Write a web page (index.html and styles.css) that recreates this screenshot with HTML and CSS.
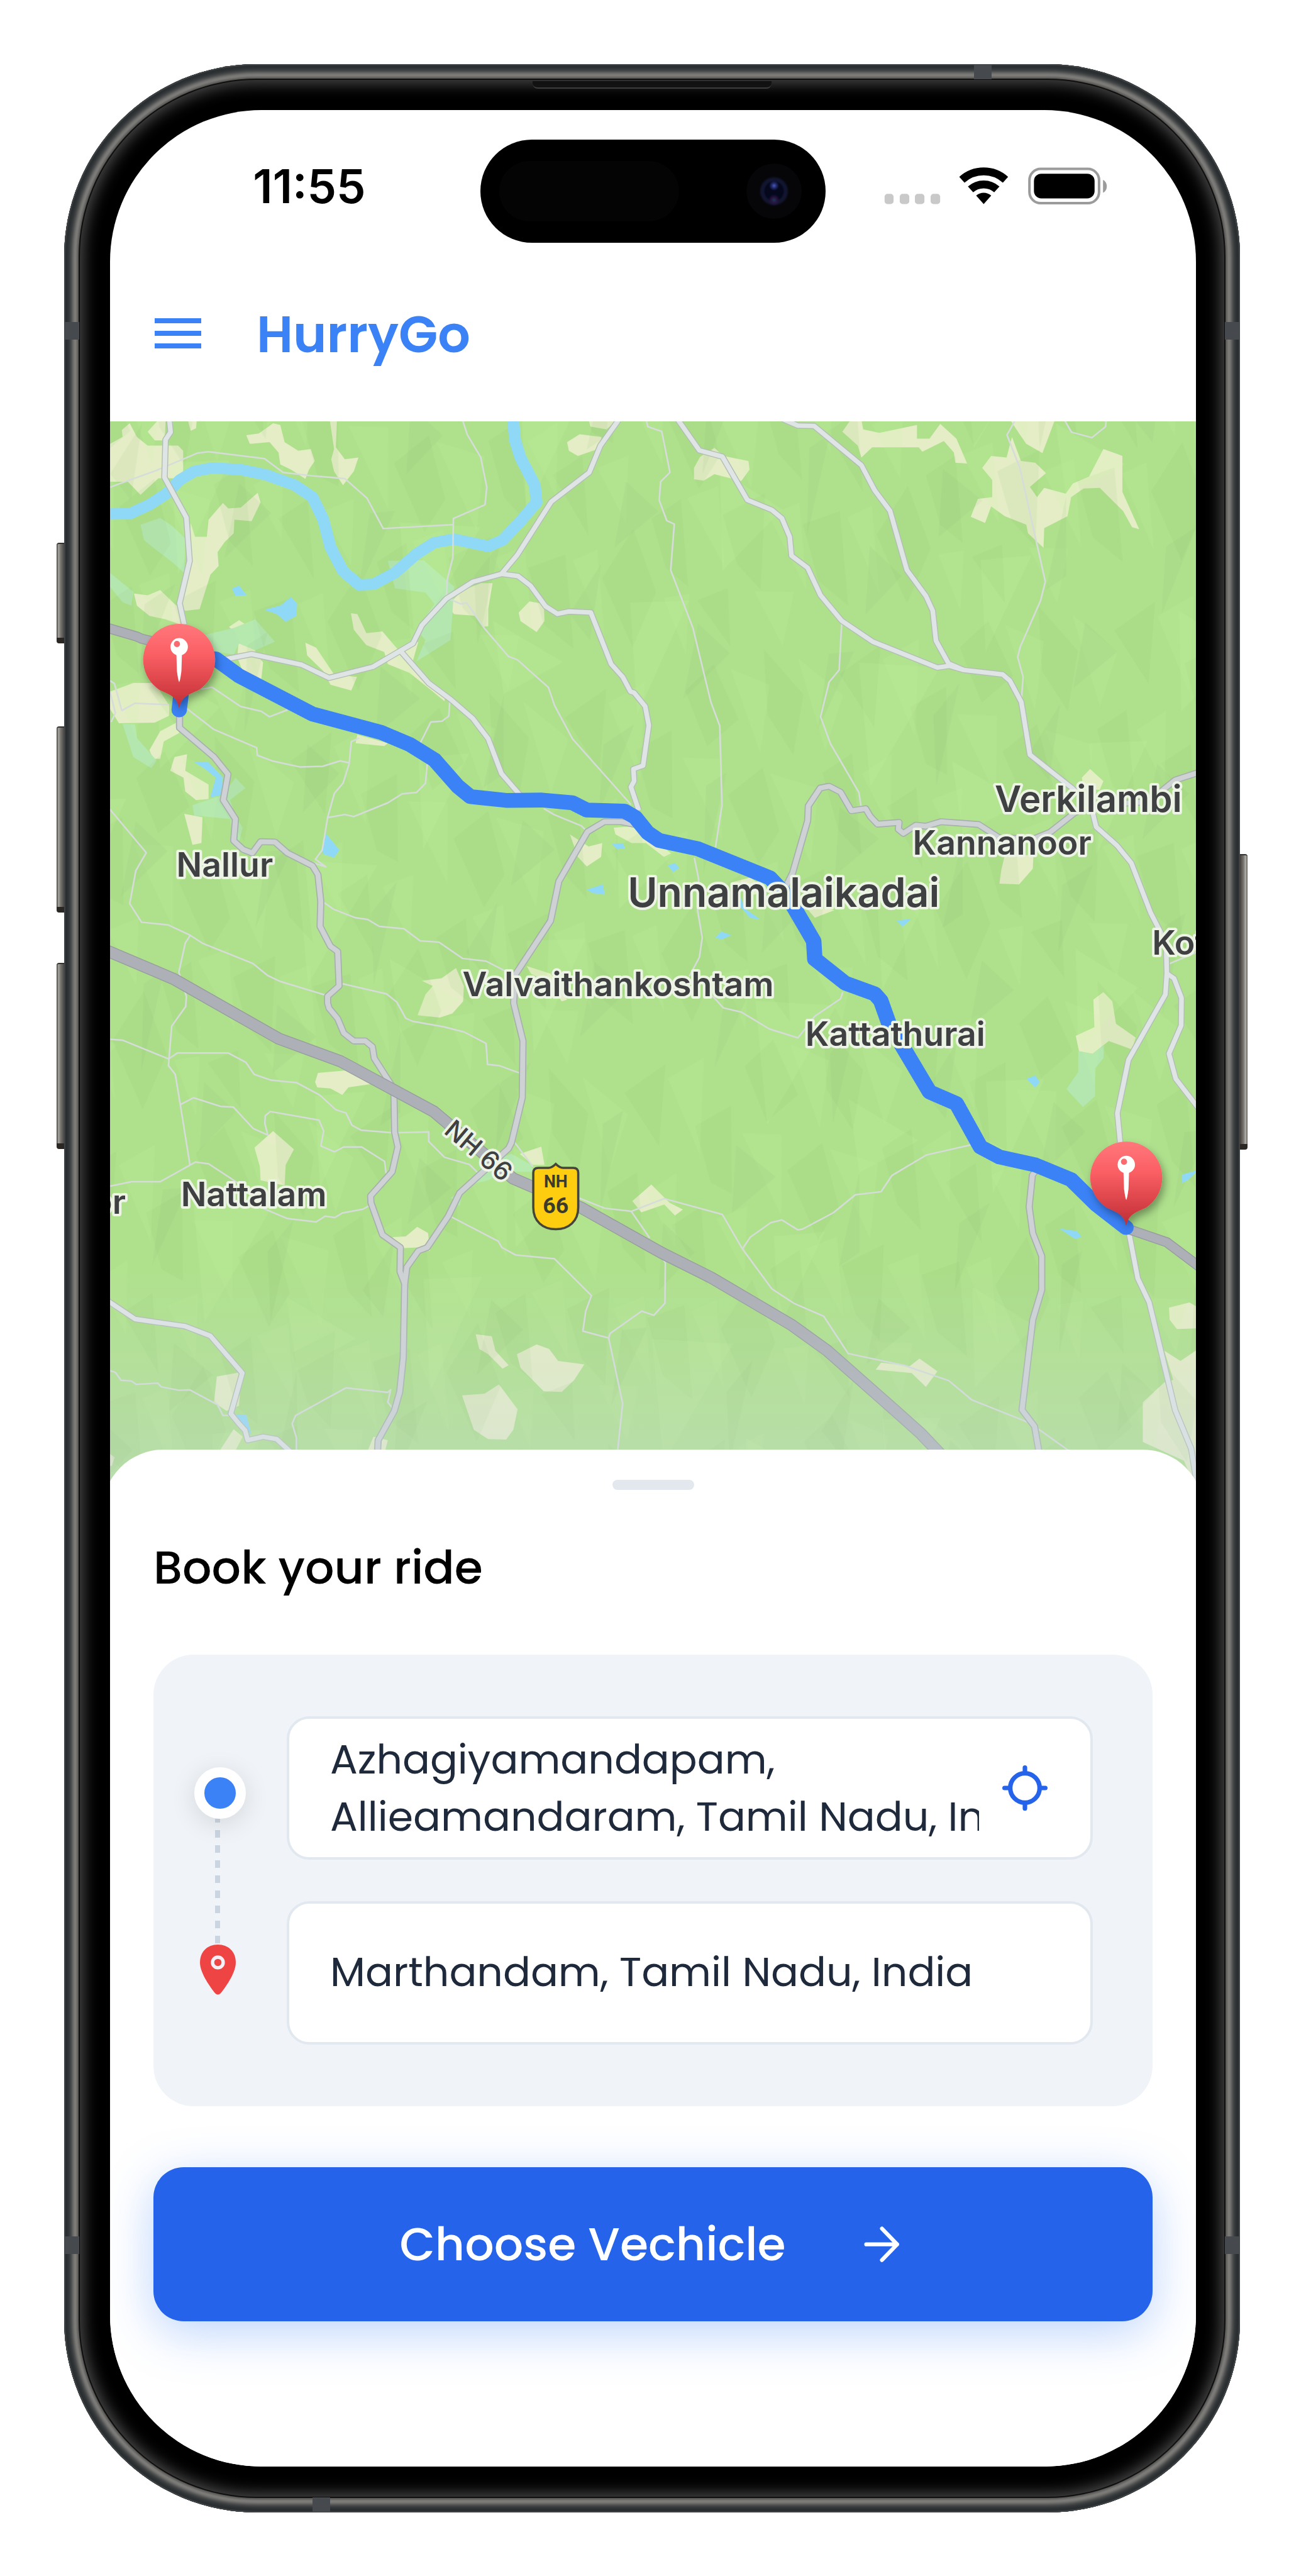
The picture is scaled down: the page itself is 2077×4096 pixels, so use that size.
FILE: index.html
```html
<!DOCTYPE html>
<html lang="en">
<head>
<meta charset="utf-8">
<meta name="viewport" content="width=device-width, initial-scale=1">
<title>HurryGo</title>
<link rel="stylesheet" href="styles.css">
</head>
<body>
<div class="phone">
  <span class="side-key side-key-action"></span>
  <span class="side-key side-key-up"></span>
  <span class="side-key side-key-down"></span>
  <span class="side-key side-key-power"></span>
  <span class="antenna antenna-top"></span>
  <span class="antenna antenna-bottom"></span>
  <span class="antenna antenna-side antenna-left antenna-high"></span>
  <span class="antenna antenna-side antenna-right antenna-high"></span>
  <span class="antenna antenna-side antenna-left antenna-low"></span>
  <span class="antenna antenna-side antenna-right antenna-low"></span>
  <div class="bezel">
    <span class="earpiece"></span>
    <div class="screen">
      <div class="status-bar">
        <time class="clock">11:55</time>
        <div class="island">
          <span class="island-sensor"></span>
          <span class="island-camera"></span>
        </div>
        <svg class="status-icons" viewBox="1572 290 402 78" aria-hidden="true">
          <g fill="#c9c9c9">
            <rect x="1574" y="343" width="16" height="18" rx="5"/>
            <rect x="1601" y="343" width="17" height="18" rx="5"/>
            <rect x="1628" y="343" width="17" height="18" rx="5"/>
            <rect x="1656" y="343" width="17" height="18" rx="5"/>
          </g>
          <g fill="none" stroke="#000" stroke-width="14">
            <path d="M1711.7 317.9A58 58 0 0 1 1789.3 317.9"/>
            <path d="M1727.1 335A35 35 0 0 1 1773.9 335"/>
          </g>
          <path d="M1750.5 361L1737.1 346.1A20 20 0 0 1 1763.9 346.1Z"/>
          <rect x="1832" y="298.500" width="124" height="61" rx="20" fill="none" stroke="#9b9b9b" stroke-width="4.500"/>
          <rect x="1840" y="307" width="108" height="44" rx="13"/>
          <path d="M1963 318C1972 322 1972 337 1963 341Z" fill="#9b9b9b"/>
        </svg>
      </div>

      <header class="app-bar">
        <button class="menu-button" type="button" aria-label="Menu"><span></span><span></span><span></span></button>
        <h1 class="brand">HurryGo</h1>
      </header>

      <svg class="map" viewBox="196 749 1932 1911" role="img" aria-label="Route map">
        <defs>
          <pattern id="facets" width="430" height="520" patternUnits="userSpaceOnUse" patternTransform="rotate(-9) scale(1.15 1.3)">
            <g fill="#86b467" fill-opacity=".09">
              <path d="M20 40L70 10 95 90 40 120Z"/><path d="M150 0L200 70 170 150 140 90Z"/>
              <path d="M260 50L330 20 300 130Z"/><path d="M360 110L420 90 400 210 370 190Z"/>
              <path d="M60 190L120 160 130 250 90 290Z"/><path d="M210 180L260 160 250 300 220 260Z"/>
              <path d="M300 240L350 220 340 330Z"/><path d="M10 320L60 300 50 420 20 390Z"/>
              <path d="M120 330L190 310 160 440 130 400Z"/><path d="M240 360L300 350 290 480 250 440Z"/>
              <path d="M350 390L410 330 430 420 380 490Z"/><path d="M60 440L110 430 100 510Z"/>
            </g>
            <g fill="#c4f79e" fill-opacity=".11">
              <path d="M95 20L150 50 120 140Z"/><path d="M200 20L260 80 220 150Z"/>
              <path d="M330 40L390 20 360 150Z"/><path d="M0 130L60 140 40 250Z"/>
              <path d="M130 170L200 200 170 300Z"/><path d="M270 190L320 170 300 270Z"/>
              <path d="M370 240L420 230 400 320Z"/><path d="M70 300L120 290 110 400Z"/>
              <path d="M190 340L240 330 230 450Z"/><path d="M310 360L350 350 340 470Z"/>
              <path d="M150 440L210 450 180 520Z"/><path d="M10 430L50 430 30 510Z"/>
            </g>
          </pattern>
          <pattern id="ridges" width="610" height="370" patternUnits="userSpaceOnUse" patternTransform="rotate(17) scale(1.4 1.7)">
            <g fill="#719f55" fill-opacity=".07">
              <path d="M30 30L60 20 45 110Z"/><path d="M180 60L200 20 210 130Z"/>
              <path d="M330 10L345 90 310 70Z"/><path d="M470 40L520 60 480 120Z"/>
              <path d="M100 180L160 200 120 250Z"/><path d="M260 170L290 250 270 270Z"/>
              <path d="M400 190L430 160 420 260Z"/><path d="M540 200L560 180 570 290Z"/>
              <path d="M40 280L90 300 60 350Z"/><path d="M330 290L380 310 340 360Z"/>
            </g>
            <g fill="#cdfaa8" fill-opacity=".11">
              <path d="M70 30L170 10 130 150Z"/><path d="M220 100L320 120 260 170Z"/>
              <path d="M380 40L450 20 430 150Z"/><path d="M180 260L240 240 220 350Z"/>
              <path d="M440 250L530 270 480 350Z"/>
            </g>
          </pattern>
          <linearGradient id="fade" x1="0" y1="0" x2="0" y2="1">
            <stop offset="0" stop-color="#c9d8dc" stop-opacity="0"/>
            <stop offset="1" stop-color="#c9d8dc" stop-opacity=".42"/>
          </linearGradient>
          <linearGradient id="pinRed" x1="0" y1="0" x2="0" y2="1">
            <stop offset="0" stop-color="#ff777b"/>
            <stop offset=".35" stop-color="#fb6065"/>
            <stop offset=".8" stop-color="#d23c42"/>
            <stop offset="1" stop-color="#b92f33"/>
          </linearGradient>
          <filter id="pinShadow" x="-50%" y="-30%" width="200%" height="180%">
            <feDropShadow dx="4" dy="8" stdDeviation="7" flood-color="#000" flood-opacity=".35"/>
          </filter>
          <g id="pin">
            <path d="M0 87C-4 64 -18 62 -36 53A64 64 0 1 1 36 53C18 62 4 64 0 87Z" fill="url(#pinRed)" filter="url(#pinShadow)"/>
            <path d="M-5 -12H5L4 20Q2 36 0 40Q-2 36 -4 20Z" fill="#fff"/>
            <circle cy="-23" r="15.500" fill="#fff"/>
            <circle cx="-4" cy="-28" r="5.500" fill="#fb6a6f"/>
          </g>
          <g id="lightRoads">
            <path d="M190 5L194 46 180 68 177 178 238 294 247 420 219 543 232 605"/>
            <path d="M300 715L360 703 420 691 560 722 636 760 758 728 870 660 895 607 963 530 1037 481 1117 458 1161 403 1256 248 1362 163 1393 85 1443 12"/>
            <path d="M1117 458L1163 464 1198 492 1240 552 1273 574 1305 567 1366 570 1423 720 1455 757 1477 800 1487 803 1518 843 1528 898 1512 1015 1485 1025 1487 1060 1478 1077 1500 1145"/>
            <path d="M838 685L914 775 976 823 1037 878 1080 937 1117 1038 1170 1102"/>
            <g transform="translate(1521 0)">
              <path d="M87 8L148 99 212 117 282 243 350 272 378 296 400 350 405 405 450 440 486 520 545 594 632 655 812 730 845 725 885 737 994 750 1014 768 1046 830 1070 983 1185 1078 1240 1130 1255 1193 1313 1247 1353 1298 1407 1443 1450 1530 1452 1619 1448 1680 1345 1870 1314 2025 1322 2110"/>
              <path d="M380 8L423 27 468 28 600 142 637 215 680 275 727 447 780 522 799 565 808 652 843 718 885 737"/>
              <path d="M1452 1619L1472 1633 1493 1690 1492 1770 1458 1852 1477 1925 1540 2010"/>
              <path d="M1345 2365L1371 2505 1403 2575 1475 2887 1520 3000 1534 3090"/>
            </g>
            <path d="M20 2571L95 2623 235 2644 305 2672 394 2780 362 2898 383 2925 402 2947 409 2975 452 2965 490 2972 535 3015"/>
          </g>
          <g id="greyRoads">
            <path d="M219 860L219 905 315 990 354 1040 341 1115 375 1170 370 1233 397 1259 422 1269 445 1236 485 1237 520 1269 590 1306 605 1332 613 1410 611 1482 640 1540 660 1555 664 1655 632 1685 632 1705 636 1720 660 1750 677 1792 705 1815 737 1815 757 1832 762 1865 808 1940 817 1965 819 2080 828 2123 812 2195 752 2265 753 2285 785 2378 835 2415 834 2485 847 2520 843 2735 833 2835 818 2890 773 2975 770 3030"/>
            <path d="M1510 1190L1450 1178 1404 1178 1357 1207 1277 1351 1254 1466 1155 1623 1151 1705 1177 1815 1175 1980 1145 2110 1137 2127 1000 2257 968 2325 910 2415 885 2425 853 2472 847 2520"/>
            <path d="M1906 1375L1929 1327 1971 1175 1973 1132 2006 1080 2031 1075 2063 1092 2093 1146 2133 1140 2146 1163 2166 1185 2226 1180 2224 1200 2238 1212 2273 1188 2301 1191 2343 1178 2448 1186 2506 1225 2601 1228 2648 1208 2716 1152 2761 1130 2921 1120 2996 1057 3070 1032"/>
            <path d="M2609 2190L2598 2205 2589 2297 2599 2373 2624 2440 2624 2538 2599 2625 2569 2887 2604 2935 2620 3030"/>
          </g>
        </defs>

        <rect x="196" y="749" width="1932" height="1911" fill="#afe18d"/>
        <g transform="translate(180 740) scale(.6378 .6122)">
          <g fill="#e4edc6">
            <path d="M25 80L60 60 58 40 80 20 100 60 130 85 215 85 229 100 229 180 160 180 110 228 75 190 25 190ZM160 10L180 10 178 70 150 70 130 45ZM242 10L267 10 265 35 250 42Z"/>
            <path d="M405 55L440 50 480 20 500 25 512 75 550 100 585 95 596 130 580 155 570 182 530 155 500 140 495 105 470 75 415 80Z"/>
            <path d="M638 10L658 10 655 90 680 125 718 120 705 160 675 200 650 160 642 125 650 95Z"/>
            <path d="M437 222L445 250 420 305 372 300 370 340 345 365 325 395 328 435 305 460 275 560 235 565 215 545 245 430 250 310 262 350 295 350 300 300 340 252 355 268 390 265Z"/>
            <path d="M92 515L130 520 165 505 205 545 222 560 235 610 180 590 135 580 100 550Z"/>
            <path d="M357 612L385 592 410 610 432 690 452 715 447 765 400 755 380 700 385 640Z"/>
            <path d="M570 658L600 672 650 750 714 757 698 797 640 780 620 740 575 695Z"/>
            <path d="M697 572L715 575 740 630 785 625 830 680 885 655 870 710 900 755 960 800 958 828 920 795 860 745 800 720 790 685 740 665 705 620Z"/>
            <path d="M965 550L1010 505 1060 485 1092 485 1080 560 1080 610 1065 612 1045 580 985 575Z"/>
            <path d="M1165 570L1195 538 1235 545 1237 595 1215 627 1170 595ZM1300 75L1335 52 1395 60 1400 90 1330 115 1305 100ZM1360 10L1440 10 1410 38 1365 30Z"/>
            <path d="M25 800L90 775 150 775 190 840 190 870 150 890 50 892 25 850ZM135 970L165 915 210 890 218 920 175 945 165 995 145 995Z"/>
            <path d="M193 1030L205 990 240 982 235 1030 300 1070 300 1112 265 1115 235 1090 230 1050ZM232 1155L283 1165 280 1240 255 1245Z"/>
            <path d="M1308 1215L1360 1250 1398 1240 1395 1280 1355 1308 1330 1280ZM1430 1195L1500 1190 1590 1270 1570 1280 1520 1240 1480 1240 1435 1215ZM715 925L800 950 790 958 710 950Z"/>
            <g transform="translate(1521 0)">
              <path d="M133 150L150 118 190 92 215 115 285 130 288 155 265 188 190 168 160 187 133 183Z"/>
              <path d="M547 45L570 10 600 10 605 38 650 48 755 25 755 65 790 65 820 22 865 65 895 137 862 135 858 105 830 72 770 103 760 90 630 90 600 120 590 85Z"/>
              <path d="M1015 10L1140 10 1105 107 1060 80 1040 50Z"/>
              <path d="M1020 60L1045 130 1085 135 1115 165 1070 205 1090 235 1110 208 1170 225 1190 195 1235 175 1275 95 1328 115 1328 220 1375 328 1355 322 1330 275 1265 208 1220 210 1185 235 1175 290 1110 325 1108 382 1065 340 1060 315 1000 290 962 262 945 310 905 292 925 240 965 235 965 185 937 150 962 115 1005 120Z"/>
              <path d="M1215 1050L1238 1025 1275 1060 1265 1085 1220 1085ZM1000 1275L1080 1275 1078 1315 1040 1360 985 1358 990 1320ZM235 1355L290 1340 340 1380 300 1390ZM440 1420L525 1435 470 1457Z"/>
            </g>
            <g transform="translate(0 1535)">
              <path d="M895 105L950 98 990 68 1012 120 1010 165 980 200 945 212 883 205 905 145 925 120ZM1187 62L1255 85 1300 160 1285 165 1250 110 1200 85Z"/>
              <path d="M597 400L605 373 690 365 755 405 690 415 673 437 640 418 603 415ZM428 590L480 542 538 595 515 640 512 700 445 685 443 645Z"/>
              <path d="M813 850L850 848 882 820 912 838 918 890 885 880 835 882ZM1168 608L1228 587 1237 640 1205 640Z"/>
              <path d="M1482 745L1535 697 1586 750 1623 770 1601 787 1571 755 1507 778Z"/>
              <path d="M1045 1132L1090 1138 1100 1180 1137 1222 1120 1232 1080 1190 1055 1175ZM1160 1190L1215 1162 1250 1175 1275 1210 1348 1220 1320 1265 1285 1300 1235 1298 1170 1230Z"/>
              <path d="M1007 1310L1070 1305 1110 1278 1162 1350 1150 1410 1130 1438 1080 1437 1040 1410ZM323 1255L390 1242 385 1340 350 1355 315 1330Z"/>
              <path d="M325 1480L370 1408 395 1430 370 1480ZM740 1480L760 1430 800 1440 790 1480ZM25 1480L38 1490 30 1515 25 1515Z"/>
            </g>
            <g transform="translate(1521 1535)">
              <path d="M1247 160L1275 138 1300 165 1310 230 1365 270 1355 305 1290 280 1245 317 1207 310 1198 265 1250 240Z"/>
              <path d="M640 1235L655 1215 735 1225 762 1203 812 1240 780 1285 740 1245ZM1458 1055L1515 1040 1540 1055 1540 1115 1480 1117 1460 1090Z"/>
              <path d="M1385 1330L1445 1272 1470 1265 1445 1180 1490 1210 1540 1175 1540 1600 1500 1500 1385 1445Z"/>
            </g>
          </g>
          <g fill="#b4e7b0">
            <path d="M110 315L165 295 200 320 235 355 232 455 200 425 150 385 120 360ZM25 455L90 510 85 550 60 540 25 495Z"/>
            <path d="M800 420L900 418 985 495 975 650 880 712 905 650 880 620 920 560 930 545 905 512 820 500Z"/>
            <path d="M290 635L370 615 430 590 485 655 430 680 385 660 370 692 300 680ZM60 893L95 895 100 935 155 1000 140 1022 90 990Z"/>
            <path d="M255 1130L340 1100 375 1050 403 1080 360 1115 375 1160 395 1195 385 1235 370 1230 360 1170 260 1160Z"/>
            <path d="M1015 2235L1100 2160 1145 2143 1200 2175 1205 2195 1120 2195 1080 2220 1020 2235ZM975 2270L1010 2250 1000 2295Z"/>
            <path d="M2726 1845L2766 1853 2798 1825 2796 1865 2773 1895 2773 1975 2739 2007 2693 1955 2726 1905Z"/>
          </g>
        </g>
        <rect x="196" y="749" width="1932" height="1911" fill="url(#facets)"/>
        <rect x="196" y="749" width="1932" height="1911" fill="url(#ridges)"/>

        <g transform="translate(180 740) scale(.6378 .6122)" stroke-linejoin="round">
          <g fill="#8fd9f7">
            <path d="M365 500L385 492 407 520 375 522ZM455 562L500 550 530 525 547 545 545 580 515 597 490 575ZM260 1005L300 1005 340 1050 335 1100 305 1108 320 1050 290 1025Z"/>
            <path d="M618 1255L628 1213 665 1260 650 1283 620 1272ZM1425 1243L1455 1240 1462 1255 1440 1258ZM1355 1375L1400 1360 1405 1390 1370 1385Z"/>
            <path d="M1581 1305L1601 1298 1613 1312 1596 1325ZM1781 1390L1796 1430 1839 1462 1811 1458 1783 1425ZM1713 1515L1731 1497 1759 1508 1731 1520ZM2219 1465L2261 1460 2236 1483Z"/>
            <path d="M375 2900L405 2900 420 2960 395 2935ZM2581 1925L2606 1915 2619 1935 2606 1950ZM2673 2360L2721 2367 2736 2385 2716 2390ZM3016 2203L3061 2190 3031 2220 3016 2228Z"/>
          </g>
          <path d="M10 284L80 283 135 257 185 223 220 185 260 160 310 150 390 155 460 170 540 200 590 235 620 300 640 380 675 450 720 490 760 488 820 455 880 400 930 367 985 357 1080 378 1120 360 1170 305 1215 250 1210 200 1170 120 1155 70 1149 5" fill="none" stroke="#8fd9f7" stroke-width="33"/>

          <g fill="none" stroke="#d6dcda" stroke-width="4.500">
            <path d="M25 206L155 157 268 107 300 103 456 123 508 163 590 173 680 181 742 238 787 326 981 315"/>
            <path d="M1008 10L1022 54 1059 119 1076 206 1071 257 983 297 981 412 966 473 963 527 1003 545 1020 542 1070 617 1137 698 1161 707 1248 788 1265 840 1315 937 1478 1128"/>
            <path d="M25 768L37 776 58 855 94 834 190 838M25 800L40 862 28 888M280 793L310 787 389 843 447 857 470 873 520 853"/>
            <path d="M238 848L315 910 434 963 436 985 480 1002 556 1019 618 1017 667 1001 692 1007M720 935L698 945 692 1010 675 1066 651 1095 632 1166 617 1260 598 1287 627 1309 590 1297"/>
            <path d="M632 1166L680 1157 705 1163 800 1123 840 1097 880 1093 905 1066 910 1010M890 950L920 888 951 886 970 871 973 825"/>
            <path d="M25 1142L126 1268 97 1320 80 1416 113 1470 188 1478 249 1508 235 1530 217 1615 238 1685 236 1715 197 1772 188 1887 207 1912 221 2000 248 2175M249 1508L283 1531 424 1590 465 1625 500 1642 630 1683"/>
            <path d="M618 1410L648 1432 710 1457 744 1462 776 1482 845 1489 890 1524 943 1528 1008 1575 1074 1583 1130 1613M1235 1140L1265 1158 1340 1190 1355 1205"/>
            <path d="M1521 10L1525 30 1564 44 1587 163 1561 190 1557 244 1578 303 1599 313 1589 447 1651 615 1701 830 1726 900 1732 1130 1714 1252M1655 1283L1667 1345 1664 1435 1677 1515 1669 1572 1641 1627"/>
            <path d="M2066 600L2059 737 2031 772 2007 873 2035 952 2114 1093 2121 1140M2551 10L2527 54 2563 150 2634 480 2621 535 2564 670 2557 700 2572 757 2567 830M2687 10L2707 46 2764 62 2802 30 2804 10"/>
            <g transform="translate(0 1535)">
              <path d="M25 275L61 278 188 332 213 315 355 315 404 342 427 377 475 394 545 401 610 437 655 480 683 489 700 525 725 539 815 547 914 544 914 572 958 618 1028 639 1050 662"/>
              <path d="M670 113L796 143 825 167 850 214 870 223 957 239 1013 254 1074 287 1078 348 1112 352 1170 374M221 465L258 445 333 470 369 472 425 535 465 553 457 520 458 497 472 485 608 510 621 542 613 585 651 602 677 588 727 588 791 630 795 665"/>
              <path d="M25 702L85 689 165 689 263 632 300 637 385 695M430 757L520 796 600 806 625 789 652 793 673 780 730 769 755 755M1150 570L1205 645M1330 735L1405 766 1479 775 1571 738 1733 784 1789 884 1871 1000 1934 1043 2016 1080 2084 1188 2241 1223 2365 1267 2429 1323 2591 1390M1479 775L1530 852"/>
              <path d="M975 790L1108 862 1118 880 1157 902 1265 913 1368 1020 1352 1065 1344 1123 1416 1143 1420 1130 1508 1065 1542 1077 1573 1042 1574 925 1566 910M1416 1143L1455 1333 1438 1500"/>
              <path d="M25 1238L40 1243 56 1266 85 1268 98 1278 158 1274 168 1285 217 1295 248 1294 325 1337 340 1368 360 1368M545 1480L545 1433 533 1392 543 1368 683 1288 800 1301 808 1293 800 1330 818 1353"/>
              <path d="M1706 150L1736 184 1786 196 1864 245 1944 271 1991 208 2063 157 2069 138M2611 1405L2706 1475M1789 884L1811 850 1868 808 1899 800 1944 829 1958 826 2043 779 2104 727 2176 718 2206 671 2303 611 2426 582M2979 56L3061 20"/>
            </g>
          </g>

          <use href="#greyRoads" fill="none" stroke="#a7b0ad" stroke-width="20"/>
          <use href="#greyRoads" fill="none" stroke="#ced2d5" stroke-width="14"/>
          <use href="#lightRoads" fill="none" stroke="#b3bdb5" stroke-width="18"/>
          <use href="#lightRoads" fill="none" stroke="#dfe4e5" stroke-width="13"/>
          <g fill="none">
            <path d="M15 614L100 640 112 646 200 668M2861 2360L2973 2400 3070 2476" stroke="#989ba0" stroke-width="29"/>
            <path d="M15 614L100 640 112 646 200 668M2861 2360L2973 2400 3070 2476" stroke="#adb0b6" stroke-width="24"/>
            <path d="M10 1550L203 1635 495 1808 668 1874 928 2020 1150 2215 1340 2300 1566 2432 1701 2502 1926 2640 2026 2715 2211 2885 2286 2955 2350 3025" stroke="#989ba0" stroke-width="35"/>
            <path d="M10 1550L203 1635 495 1808 668 1874 928 2020 1150 2215 1340 2300 1566 2432 1701 2502 1926 2640 2026 2715 2211 2885 2286 2955 2350 3025" stroke="#adb0b6" stroke-width="30"/>
          </g>
          <path d="M1137 2127L1050 2210" fill="none" stroke="#ced2d5" stroke-width="14"/>
          <path d="M218 853L224 800 260 700 320 705 385 754 590 865 780 918 860 953 930 998 995 1075 1030 1105 1130 1116 1230 1115 1315 1123 1355 1144 1460 1147 1490 1165 1525 1210 1556 1232 1666 1257 1866 1341 1915 1395 1988 1525 1991 1577 2076 1647 2158 1678 2175 1698 2198 1765 2311 1963 2386 1997 2453 2123 2506 2152 2606 2175 2706 2218 2776 2290 2859 2357" fill="none" stroke="#3b82f6" stroke-width="43" stroke-linecap="round"/>
        </g>
        <rect x="196" y="2260" width="1932" height="400" fill="url(#fade)"/>

        <g class="places">
          <text x="314" y="1559">Nallur</text>
          <text class="town" x="1770" y="1444">Verkilambi</text>
          <text x="1624" y="1520">Kannanoor</text>
          <text class="city" x="1117" y="1613">Unnamalaikadai</text>
          <text x="2050" y="1698">Kot</text>
          <text x="823" y="1772">Valvaithankoshtam</text>
          <text x="1433" y="1860">Kattathurai</text>
          <text x="322" y="2145">Nattalam</text>
          <text x="224" y="2159" text-anchor="end">or</text>
          <text class="road-name" transform="translate(788 2014) rotate(40)">NH 66</text>
        </g>
        <path d="M958 2077H976Q982 2077 989 2070Q996 2077 1002 2077H1020Q1029 2077 1029 2086V2147C1029 2172 1012 2186 989 2186C966 2186 949 2172 949 2147V2086Q949 2077 958 2077Z" fill="#ffcd0f" stroke="#45443a" stroke-width="4"/>
        <g class="shield">
          <text x="989" y="2112">NH</text>
          <text class="shield-number" x="989" y="2158">66</text>
        </g>
        <use href="#pin" x="319" y="1173"/>
        <use href="#pin" x="2004" y="2094"/>
      </svg>

      <main class="sheet">
        <span class="grabber"></span>
        <h2 class="sheet-title">Book your ride</h2>
        <form class="booking">
          <div class="trip-card">
            <div class="rail" aria-hidden="true">
              <span class="rail-start"></span>
              <span class="rail-line"></span>
              <svg class="rail-end" viewBox="0 0 64 90">
                <path d="M32 0C13 0 0 13 0 32C0 52 20 78 27 87Q32 92 37 87C44 78 64 52 64 32C64 13 51 0 32 0Z" fill="#ef4444"/>
                <circle cx="32" cy="32" r="9.500" fill="none" stroke="#f4f0f5" stroke-width="6"/>
              </svg>
            </div>
            <div class="fields">
              <div class="field">
                <textarea class="field-text" rows="2" wrap="off" aria-label="Pickup location">Azhagiyamandapam,
Allieamandaram, Tamil Nadu, India</textarea>
                <button class="locate" type="button" aria-label="Use current location">
                  <svg viewBox="0 0 80 80" fill="none" stroke="#2563eb" stroke-width="8" stroke-linecap="round">
                    <circle cx="40" cy="40" r="26"/>
                    <path d="M40 4V13M40 67V76M4 40H13M67 40H76"/>
                  </svg>
                </button>
              </div>
              <div class="field">
                <input class="field-text" type="text" aria-label="Drop location" value="Marthandam, Tamil Nadu, India">
              </div>
            </div>
          </div>
          <button class="primary" type="button">
            <span>Choose Vechicle</span>
            <svg viewBox="0 0 76 64" fill="none" stroke="#fff" stroke-width="7" stroke-linecap="round" stroke-linejoin="round" aria-hidden="true">
              <path d="M4 32H59M32 4L59 32 32 60"/>
            </svg>
          </button>
        </form>
      </main>
    </div>
  </div>
</div>
</body>
</html>
```
FILE: styles.css
```css
* {
  box-sizing: border-box;
}

body {
  margin: 0;
  padding: 102px 105px 104px 102px;
  background: #fff;
  font-family: Poppins, Inter, "Open Sans", sans-serif;
}

button,
input,
textarea {
  margin: 0;
  padding: 0;
  border: 0;
  background: none;
  font: inherit;
  color: inherit;
}

/* Device frame */
.phone {
  position: relative;
  padding: 25px;
  border-radius: 306px;
  background: #0c0c0c;
  box-shadow:
    inset 0 0 1px 2px #3f4446,
    inset 0 0 4px 7px #2a2e30,
    inset 0 0 5px 11px #3a3d3f,
    inset 0 0 5px 14px #585958,
    inset 0 0 3px 20px #82817e,
    inset 0 0 1px 23px #5d5c5a;
}

.side-key {
  position: absolute;
  left: -12px;
  width: 12px;
  border-radius: 4px 0 0 4px;
  background: linear-gradient(90deg, #3a3835, #a9a7a0 3px, #7b7974 6px, #4a4642);
  border-top: 2px solid #33312f;
  border-bottom: 9px solid #2b2725;
}

.side-key-action {
  top: 761px;
  height: 160px;
}

.side-key-up {
  top: 1053px;
  height: 296px;
}

.side-key-down {
  top: 1429px;
  height: 296px;
}

.side-key-power {
  top: 1256px;
  left: auto;
  right: -12px;
  height: 470px;
  border-radius: 0 4px 4px 0;
  background: linear-gradient(270deg, #55524e, #b5b3ac 3px, #7b7974 6px, #45403c);
}

.antenna {
  position: absolute;
  width: 28px;
  height: 23px;
  background: #46494d;
}

.antenna-top {
  top: 1px;
  right: 395px;
}

.antenna-bottom {
  bottom: 1px;
  left: 395px;
}

.antenna-side {
  width: 23px;
  height: 28px;
}

.antenna-left {
  left: 1px;
}

.antenna-right {
  right: 1px;
}

.antenna-high {
  top: 410px;
}

.antenna-low {
  bottom: 411px;
}

.bezel {
  position: relative;
  padding: 48px 45px 48px 48px;
  border-radius: 281px;
  background: #000;
  box-shadow: inset 0 0 24px 5px #4e4e4e;
}

.earpiece {
  position: absolute;
  top: 2px;
  left: 50%;
  width: 380px;
  height: 12px;
  margin-left: -190px;
  border-bottom: 2px solid #3d3d3d;
  border-radius: 0 0 8px 8px;
  background: #121212;
}

.screen {
  position: relative;
  overflow: hidden;
  border-radius: 241px;
  background: #fff;
}

/* Status bar */
.status-bar {
  display: grid;
  grid-template-columns: 1fr 549px 1fr;
  align-items: center;
  padding-top: 47px;
}

.clock {
  padding: 0 0 16px 45px;
  font-family: Inter, sans-serif;
  font-size: 74px;
  font-weight: 600;
  line-height: 88px;
  text-align: center;
  color: #000;
}

.island {
  display: flex;
  align-items: center;
  justify-content: space-between;
  height: 164px;
  padding: 0 38px 0 30px;
  border-radius: 82px;
  background: #000;
}

.island-sensor {
  width: 286px;
  height: 96px;
  border-radius: 48px;
  background: #040404;
}

.island-camera {
  width: 88px;
  height: 88px;
  border-radius: 50%;
  background:
    radial-gradient(circle at 50% 40%, #4a5ab0 0, #20286b 4px, transparent 8px),
    radial-gradient(circle at 50% 66%, #12404a 0, #2b1545 4px, transparent 9px),
    radial-gradient(circle, #05081c 0 14px, #12152f 17px 20px, #060508 24px);
}

.status-icons {
  justify-self: center;
  width: 359px;
  margin: 0 46px 16px 0;
}

/* App bar */
.app-bar {
  display: flex;
  align-items: center;
  gap: 88px;
  height: 284px;
  padding: 4px 71px 0;
}

.menu-button {
  display: flex;
  flex-direction: column;
  gap: 12px;
  width: 74px;
}

.menu-button span {
  height: 8px;
  background: #3b82f6;
}

.brand {
  margin: 0;
  padding-top: 4px;
  font-size: 81px;
  font-weight: 600;
  line-height: 120px;
  color: #3b82f6;
}

/* Map */
.map {
  display: block;
  width: 100%;
}

.places {
  font-family: Inter, sans-serif;
  font-size: 60px;
  font-weight: 600;
  fill: #3f4041;
  stroke: #edf4e6;
  stroke-width: 9px;
  stroke-linejoin: round;
  paint-order: stroke;
}

.places .town {
  font-size: 65px;
}

.places .city {
  font-size: 72px;
}

.places .road-name {
  font-size: 46px;
  font-weight: 500;
}

.shield {
  font-family: Roboto, sans-serif;
  font-size: 30px;
  font-weight: 700;
  text-anchor: middle;
  fill: #3c3a2c;
}

.shield .shield-number {
  font-size: 40px;
}

/* Booking sheet */
.sheet {
  position: relative;
  margin: -73px -12px 0;
  padding: 48px 81px 231px;
  border-radius: 97px 97px 0 0;
  background: #fff;
}

.grabber {
  display: block;
  width: 130px;
  height: 16px;
  margin: 0 auto;
  border-radius: 8px;
  background: #e3e8ef;
}

.sheet-title {
  margin: 69px 0 83px;
  font-size: 73px;
  font-weight: 500;
  line-height: 110px;
  color: #000;
}

.booking {
  display: flex;
  flex-direction: column;
  gap: 97px;
}

.trip-card {
  display: grid;
  grid-template-columns: 147px 1fr;
  padding: 98px 95px 98px 65px;
  border-radius: 64px;
  background: #f0f3f8;
}

.rail {
  display: flex;
  flex-direction: column;
  align-items: flex-start;
  padding-top: 81px;
}

.rail-start {
  position: relative;
  width: 82px;
  height: 82px;
  border: 16px solid #fff;
  border-radius: 50%;
  background: #3b82f6;
  box-shadow: 0 8px 40px rgba(0, 0, 0, .12);
}

.rail-line {
  width: 8px;
  height: 200px;
  margin-left: 33px;
  background: repeating-linear-gradient(#cbd5e1 0 6px, transparent 6px 18px, #cbd5e1 18px 24px);
}

.rail-end {
  width: 57px;
  height: 80px;
  margin-left: 9px;
}

.fields {
  display: flex;
  flex-direction: column;
  gap: 66px;
  min-width: 0;
}

.field {
  display: flex;
  align-items: center;
  gap: 37px;
  height: 228px;
  padding: 0 68px 0 65px;
  border: 4px solid #e2e8f0;
  border-radius: 36px;
  background: #fff;
}

.field-text {
  flex: 1;
  min-width: 0;
  font-size: 65px;
  line-height: 91px;
  color: #1e293b;
}

input.field-text {
  padding-bottom: 4px;
}

textarea.field-text {
  height: 182px;
  overflow: hidden;
  resize: none;
  white-space: pre;
}

.locate {
  display: flex;
  width: 72px;
  height: 72px;
}

.locate svg {
  width: 100%;
}

.primary {
  display: flex;
  align-items: center;
  justify-content: center;
  gap: 124px;
  height: 245px;
  border-radius: 48px;
  background: #2563eb;
  box-shadow: 0 18px 76px rgba(59, 130, 246, .34);
  font-size: 73px;
  font-weight: 500;
  line-height: 110px;
  color: #fff;
}

.primary svg {
  width: 68px;
}
```
